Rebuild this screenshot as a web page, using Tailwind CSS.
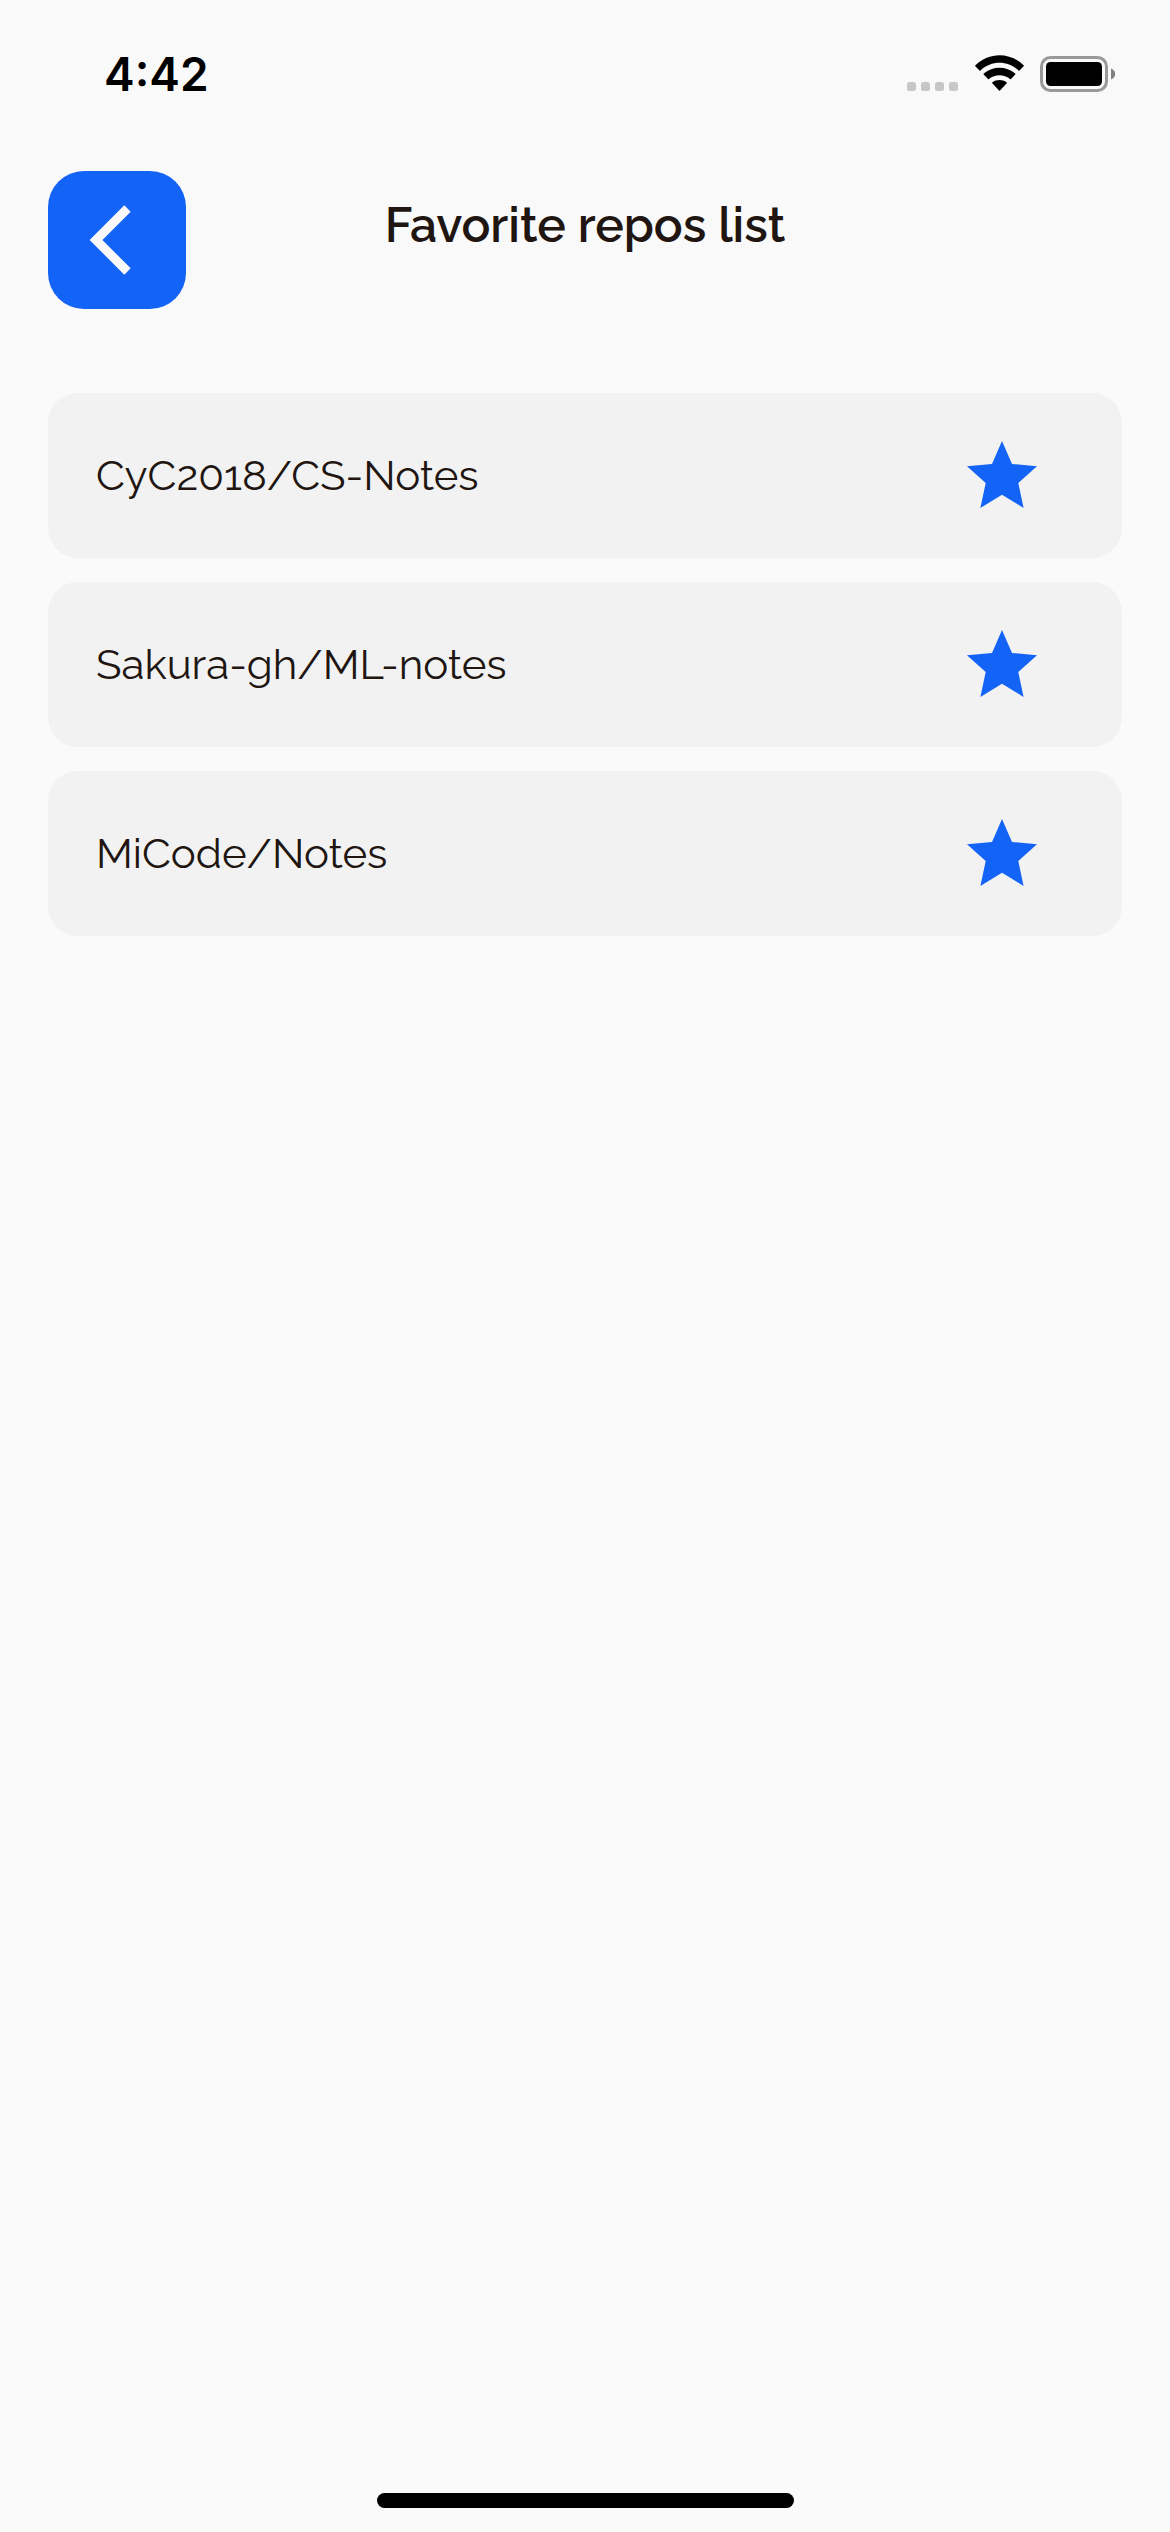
<!DOCTYPE html>
<html lang="en">
<head>
<meta charset="utf-8">
<meta name="viewport" content="width=device-width, initial-scale=1">
<title>Favorite repos list</title>
<script src="https://cdn.jsdelivr.net/npm/@tailwindcss/browser@4"></script>
</head>
<body class="flex min-h-screen flex-col bg-[#fafafa] font-['Raleway','Lato',sans-serif] text-[#201510]">
  <header class="bg-[#f9f9f9]">
    <div class="flex h-[141px] items-center justify-between pt-[6px] pr-[54px] pl-[104px]">
      <time class="font-['Inter',sans-serif] text-[46px] leading-none font-semibold text-black">4:42</time>
      <div class="flex items-end gap-4">
        <svg class="h-[10px] w-[52px]" viewBox="0 0 52 10" fill="#c7c7c7" role="img" aria-label="No signal"><rect x="0" y="0" width="9" height="9" rx="2.5"/><rect x="14" y="0" width="9" height="9" rx="2.5"/><rect x="28" y="0" width="9" height="9" rx="2.5"/><rect x="42" y="0" width="9" height="9" rx="2.5"/></svg>
        <svg class="h-[37px] w-[49px]" viewBox="0 0 49 37" role="img" aria-label="Wi-Fi"><path d="M.3 11.2Q-.1 10.7.4 10.2C14-3.2 35-3.2 48.6 10.2Q49.1 10.7 48.6 11.2L44.5 15.4Q44 15.9 43.5 15.4C32.500 5.300 16.500 5.300 5.500 15.400Q5 15.900 4.500 15.400ZM8.700 19.600Q8.300 19.100 8.800 18.600C17.800 10.800 31.200 10.800 40.200 18.600Q40.700 19.100 40.200 19.600L36 23.900Q35.500 24.400 35 23.900C28.900 18.900 20.100 18.900 14 23.900Q13.500 24.400 13 23.900ZM17.300 28.200Q16.900 27.700 17.400 27.200C21.500 24.400 27.500 24.400 31.600 27.200Q32.100 27.700 31.700 28.200L25 35.600Q24.500 36.100 24 35.600Z"/></svg>
        <svg class="h-[37px] w-[76px]" viewBox="0 0 76 37" role="img" aria-label="Battery full"><rect x="1.5" y="2.5" width="65" height="33" rx="9" fill="none" stroke="#999" stroke-width="3"/><rect x="6" y="7" width="56" height="24" rx="4.5"/><path d="M71 13.500C76.500 15.500 76.500 22.500 71 24.500Z" fill="#808080"/></svg>
      </div>
    </div>
    <div class="grid h-[168px] grid-cols-[138px_1fr_138px] items-center px-12">
      <button type="button" aria-label="Back" class="flex size-[138px] items-center justify-center self-end rounded-[36px] bg-[#1463f7]">
        <svg class="size-[138px]" viewBox="0 0 138 138" fill="none" stroke="#f9f9f9" stroke-width="9"><path d="M79.500 37.500L48 69L79.500 100.500"/></svg>
      </button>
      <h1 class="text-center text-[48px] leading-[60px] font-semibold">Favorite repos list</h1>
    </div>
  </header>
  <main class="flex-1 px-12 pt-[84px]">
    <ul class="flex flex-col gap-6">
      <li class="flex h-[165px] items-center justify-between rounded-[30px] bg-[#f2f2f2] pr-[84px] pl-12">
        <span class="text-[42px] leading-[54px]">CyC2018/CS-Notes</span>
        <button type="button" aria-label="Remove CyC2018/CS-Notes from favorites" class="text-[#1463f7]"><svg class="size-[72px]" viewBox="0 0 72 72" fill="currentColor"><path d="M36 1L46 24L71 26.300L52.300 43L57.600 68L36 54.800L14.400 68L19.700 43L1 26.300L26 24Z"/></svg></button>
      </li>
      <li class="flex h-[165px] items-center justify-between rounded-[30px] bg-[#f2f2f2] pr-[84px] pl-12">
        <span class="text-[42px] leading-[54px]">Sakura-gh/ML-notes</span>
        <button type="button" aria-label="Remove Sakura-gh/ML-notes from favorites" class="text-[#1463f7]"><svg class="size-[72px]" viewBox="0 0 72 72" fill="currentColor"><path d="M36 1L46 24L71 26.300L52.300 43L57.600 68L36 54.800L14.400 68L19.700 43L1 26.300L26 24Z"/></svg></button>
      </li>
      <li class="flex h-[165px] items-center justify-between rounded-[30px] bg-[#f2f2f2] pr-[84px] pl-12">
        <span class="text-[42px] leading-[54px]">MiCode/Notes</span>
        <button type="button" aria-label="Remove MiCode/Notes from favorites" class="text-[#1463f7]"><svg class="size-[72px]" viewBox="0 0 72 72" fill="currentColor"><path d="M36 1L46 24L71 26.300L52.300 43L57.600 68L36 54.800L14.400 68L19.700 43L1 26.300L26 24Z"/></svg></button>
      </li>
    </ul>
  </main>
  <footer class="flex justify-center pb-6"><div class="h-[15px] w-[417px] rounded-full bg-black"></div></footer>
</body>
</html>
